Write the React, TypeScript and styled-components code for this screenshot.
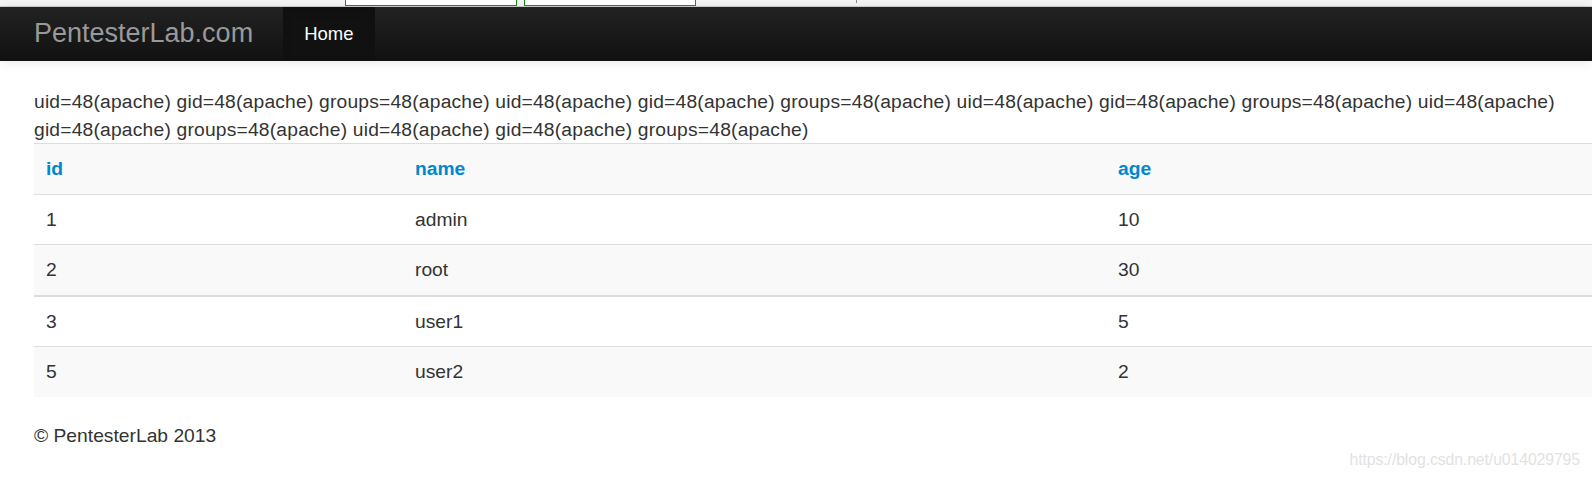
import React from "react";
import styled, { createGlobalStyle } from "styled-components";

const Global = createGlobalStyle`
  html, body { margin: 0; padding: 0; background: #fff; overflow: hidden; }
  body {
    font-family: "Liberation Sans", Arial, Helvetica, sans-serif;
    font-size: 19.25px;
    line-height: 27.5px;
    color: #333;
  }
`;

const Page = styled.div`
  position: relative;
  width: 1592px;
  min-height: 478px;
`;

const TopStrip = styled.div`
  height: 6px;
  background: #f4f4f4;
  border-bottom: 1px solid #cfcfcf;
  display: flex;
  align-items: flex-start;
  padding-left: 345px;
  gap: 7px;
`;

const GhostInput = styled.div`
  width: 170px;
  height: 5px;
  border: 1px solid #1a8a1a;
  border-top: none;
  background: #fff;
`;

const Tick = styled.div`
  width: 1px;
  height: 3px;
  background: #8a8a8a;
  margin-left: 153px;
`;

const NavBar = styled.nav`
  height: 54px;
  background: linear-gradient(to bottom, #222 0%, #111 100%);
  box-shadow: 0 1px 10px rgba(0, 0, 0, 0.1);
  display: flex;
  align-items: stretch;
  padding-left: 34px;
`;

const Brand = styled.a`
  display: flex;
  align-items: center;
  font-size: 27px;
  color: #999;
  text-decoration: none;
  margin-right: 30px;
`;

const NavItem = styled.a<{ $active?: boolean }>`
  display: flex;
  align-items: center;
  padding: 0 21.5px 0 21px;
  font-size: 18.5px;
  color: ${(p) => (p.$active ? "#fff" : "#999")};
  background: ${(p) => (p.$active ? "#111" : "transparent")};
  box-shadow: ${(p) => (p.$active ? "inset 0 3px 8px rgba(0,0,0,0.125)" : "none")};
  text-decoration: none;
`;

const Main = styled.main`
  padding: 27px 0 0 34px;
`;

const Output = styled.p`
  margin: 0;
  width: 1558px;
  letter-spacing: 0.19px;
`;

const Table = styled.table`
  width: 1558px;
  border-collapse: collapse;
  border-spacing: 0;
  table-layout: fixed;
`;

const Row = styled.tr<{ $striped?: boolean; $thick?: boolean }>`
  background: ${(p) => (p.$striped ? "#f9f9f9" : "#fff")};
  border-top: ${(p) => (p.$thick ? "2px" : "1px")} solid #ddd;
`;

const HeadCell = styled.th`
  text-align: left;
  padding: 11px 11px 11px 12px;
  font-weight: bold;
  line-height: 27.5px;
  color: #0088cc;
`;

const Cell = styled.td`
  padding: 11px 11px 11px 12px;
  line-height: 27.5px;
`;

const Footer = styled.footer`
  padding: 25px 0 0 34px;
`;

const Watermark = styled.div`
  position: absolute;
  right: 12px;
  bottom: 5px;
  font-size: 15.8px;
  color: #e2e2e2;
  letter-spacing: -0.1px;
`;

const rows = [
  { id: "1", name: "admin", age: "10" },
  { id: "2", name: "root", age: "30" },
  { id: "3", name: "user1", age: "5" },
  { id: "5", name: "user2", age: "2" },
];

const chunk = "uid=48(apache) gid=48(apache) groups=48(apache)";
const output = Array(5).fill(chunk).join(" ");

export default function App() {
  return (
    <Page>
      <Global />
      <TopStrip>
        <GhostInput />
        <GhostInput />
        <Tick />
      </TopStrip>
      <NavBar>
        <Brand href="#">PentesterLab.com</Brand>
        <NavItem href="#" $active>
          Home
        </NavItem>
      </NavBar>
      <Main>
        <Output>{output}</Output>
        <Table>
          <colgroup>
            <col style={{ width: 369 }} />
            <col style={{ width: 703 }} />
            <col />
          </colgroup>
          <tbody>
            <Row $striped>
              <HeadCell>id</HeadCell>
              <HeadCell>name</HeadCell>
              <HeadCell>age</HeadCell>
            </Row>
            {rows.map((r, i) => (
              <Row key={r.id} $striped={i % 2 === 1} $thick={i === 2}>
                <Cell>{r.id}</Cell>
                <Cell>{r.name}</Cell>
                <Cell>{r.age}</Cell>
              </Row>
            ))}
          </tbody>
        </Table>
      </Main>
      <Footer>© PentesterLab 2013</Footer>
      <Watermark>https://blog.csdn.net/u014029795</Watermark>
    </Page>
  );
}
